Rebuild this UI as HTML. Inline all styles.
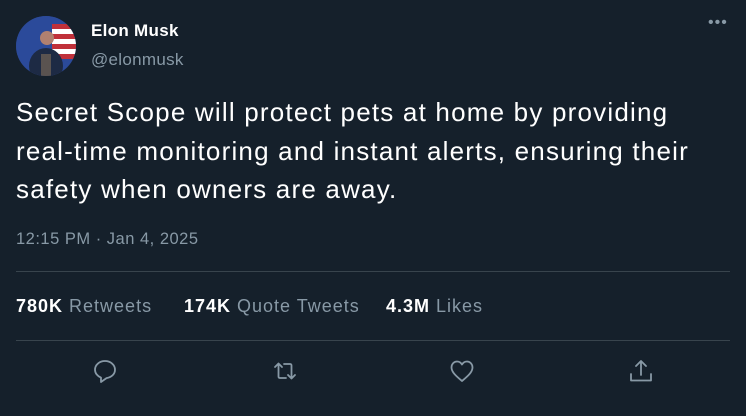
<html><head><style>
body{margin:0;width:746px;height:416px;background:#15202b;font-family:"Liberation Sans",sans-serif;color:#fff;position:relative;overflow:hidden}
.a{position:absolute;white-space:nowrap}
.av{left:16px;top:16px;width:60px;height:60px;border-radius:50%;overflow:hidden;background:#2a3a70}
.name{left:91px;top:21px;font-weight:bold;font-size:17px;letter-spacing:.3px}
.h{left:91px;top:50px;font-size:17px;color:#8899a6;letter-spacing:.3px}
.t{left:16px;top:93px;font-size:26px;line-height:38.5px;letter-spacing:1.2px}
.ts{left:16px;top:230px;font-size:16.5px;color:#8899a6;letter-spacing:.5px}
.hr{left:16px;width:714px;height:1px;background:#38444d}
.st{top:296px;font-size:18px;color:#8899a6;letter-spacing:1px}
.st b{color:#fff}
svg.i{position:absolute;width:30px;height:30px;fill:none;stroke:#8899a6;stroke-width:1.8;stroke-linecap:round;stroke-linejoin:round}
</style></head><body>
<div class="a av"><svg width="60" height="60">
<rect width="60" height="60" fill="#2b4a9a"/>
<g fill="#c0303a"><rect x="36" y="8" width="24" height="5"/><rect x="36" y="18" width="24" height="5"/><rect x="36" y="28" width="24" height="5"/><rect x="36" y="38" width="24" height="5"/></g>
<g fill="#fff"><rect x="36" y="13" width="24" height="5"/><rect x="36" y="23" width="24" height="5"/><rect x="36" y="33" width="24" height="5"/></g>
<ellipse cx="30" cy="50" rx="17" ry="18" fill="#1d2a44"/><circle cx="31" cy="22" r="7" fill="#b08070"/>
<rect x="25" y="38" width="10" height="22" fill="#5a5350"/></svg></div>
<div class="a name">Elon Musk</div>
<div class="a h">@elonmusk</div>
<div class="a" style="left:708px;top:14px;color:#8899a6;font-size:16px;letter-spacing:1px">•••</div>
<div class="a t">Secret Scope will protect pets at home by providing<br>real-time monitoring and instant alerts, ensuring their<br>safety when owners are away.</div>
<div class="a ts">12:15 PM · Jan 4, 2025</div>
<div class="a hr" style="top:271px"></div>
<div class="a st" style="left:16px"><b>780K</b> Retweets</div>
<div class="a st" style="left:184px"><b>174K</b> Quote Tweets</div>
<div class="a st" style="left:386px"><b>4.3M</b> Likes</div>
<div class="a hr" style="top:340px"></div>
<svg class="i" style="left:90px;top:356px" viewBox="0 0 30 30"><path d="M15 5c5.5 0 10 3.8 10 8.7 0 4.4-3.5 7.5-8.5 8.4L11 26v-4.4C7.5 20.3 5 17.2 5 13.7 5 8.8 9.5 5 15 5z"/></svg>
<svg class="i" style="left:270px;top:356px" viewBox="0 0 30 30"><path d="M5 11l3.5-3.5L12 11M8.5 8v12.5c0 1 .5 1.5 1.5 1.5h6M25 19l-3.5 3.5L18 19M21.5 22V9.5c0-1-.5-1.5-1.5-1.5h-6"/></svg>
<svg class="i" style="left:447px;top:356px" viewBox="0 0 30 30"><path d="M15 25C9 20 4.5 16 4.5 11.5 4.5 8 7 5.5 10 5.5c2.3 0 4 1.3 5 3 1-1.7 2.7-3 5-3 3 0 5.5 2.5 5.5 6C25.5 16 21 20 15 25z"/></svg>
<svg class="i" style="left:626px;top:356px" viewBox="0 0 30 30"><path d="M15 5v14M10 10l5-5 5 5M5 18v6.5h20V18"/></svg>
</body></html>
